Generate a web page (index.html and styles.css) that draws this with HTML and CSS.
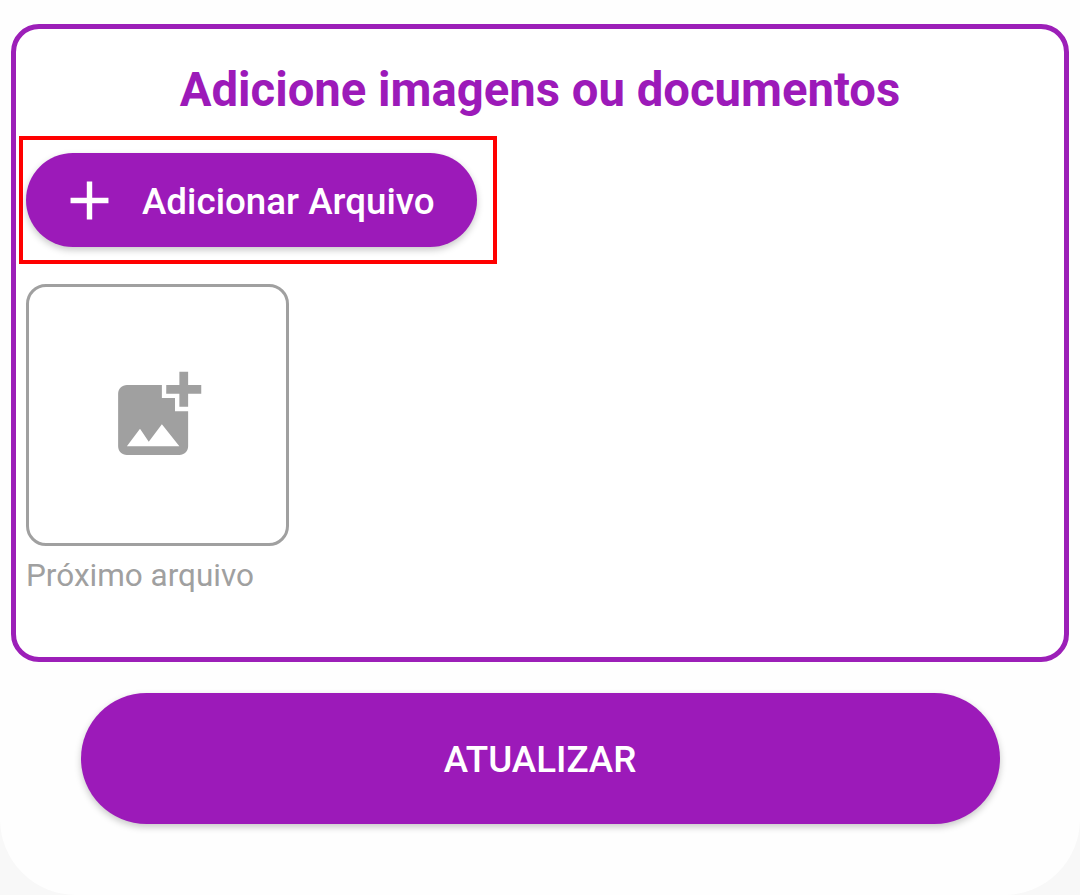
FILE: index.html
```html
<!DOCTYPE html>
<html lang="pt">
<head>
<meta charset="utf-8">
<title>Adicione imagens ou documentos</title>
<link rel="stylesheet" href="styles.css">
</head>
<body>
<main class="sheet">
  <section class="card">
    <h1 class="title">Adicione imagens ou documentos</h1>
    <div class="highlight">
      <button class="add-btn" type="button">
        <svg class="add-icon" viewBox="0 0 24 24" aria-hidden="true"><path d="M19 13h-6v6h-2v-6H5v-2h6V5h2v6h6v2z"/></svg>
        <span>Adicionar Arquivo</span>
      </button>
    </div>
    <div class="tile">
      <svg class="tile-icon" viewBox="0 0 24 24" aria-hidden="true"><path d="M19 7v2.99s-1.99.01-2 0V7h-3s.01-1.99 0-2h3V2h2v3h3v2h-3zm-3 4V8h-3V5H5c-1.1 0-2 .9-2 2v12c0 1.1.9 2 2 2h12c1.1 0 2-.9 2-2v-8h-3zM5 19l3-4 2 3 3-4 4 5H5z"/></svg>
    </div>
    <p class="tile-label">Próximo arquivo</p>
  </section>
  <button class="submit" type="button">ATUALIZAR</button>
</main>
</body>
</html>
```
FILE: styles.css
```css
* { box-sizing: border-box; }
html, body { margin: 0; height: 100%; }
body {
  background: #f8f8f8;
  font-family: Roboto, "Liberation Sans", sans-serif;
  overflow: hidden;
}
.sheet {
  width: 1080px;
  height: 895px;
  padding-top: 24px;
  background: #fefefe;
  border-radius: 0 0 76px 76px;
  display: flex;
  flex-direction: column;
  align-items: center;
}
.card {
  width: 1058px;
  height: 638px;
  border: 5px solid #9c1fb8;
  border-radius: 28px;
  background: #fff;
  padding: 0 10px;
  display: flex;
  flex-direction: column;
  align-items: flex-start;
}
.title {
  align-self: stretch;
  margin: 32px 0 0;
  color: #9c1ab9;
  font-size: 47.25px;
  font-weight: 700;
  line-height: 58px;
  text-align: center;
}
.highlight {
  margin: 17px 0 0 -7px;
  width: 478px;
  height: 128px;
  border: 4px solid #ff0000;
  padding: 13px 0 0 3px;
}
.add-btn {
  width: 450.5px;
  height: 94px;
  border: 0;
  border-radius: 47px;
  background: #9c1ab9;
  color: #fff;
  font: 500 36.75px Roboto, sans-serif;
  display: flex;
  align-items: center;
  padding: 3px 0 0 31px;
  gap: 20px;
  box-shadow: 0 3px 7px rgba(0, 0, 0, 0.22);
}
.add-icon { width: 65px; height: 65px; fill: #fff; flex: none; margin-top: -3px; }
.tile {
  margin-top: 20px;
  width: 262.5px;
  height: 262px;
  border: 3px solid #a0a0a0;
  border-radius: 20px;
  display: flex;
  align-items: center;
  justify-content: center;
}
.tile-icon { width: 105px; height: 105px; fill: #a0a0a0; }
.tile-label {
  margin: 12px 0 0;
  color: #a0a0a0;
  font-size: 31.5px;
  line-height: 36px;
}
.submit {
  margin-top: 31px;
  width: 919px;
  height: 131px;
  border: 0;
  border-radius: 66px;
  background: #9c1ab9;
  color: #fff;
  font: 500 36.75px Roboto, sans-serif;
  padding: 1px 0 0;
  box-shadow: 0 3px 7px rgba(0, 0, 0, 0.22);
}
```
